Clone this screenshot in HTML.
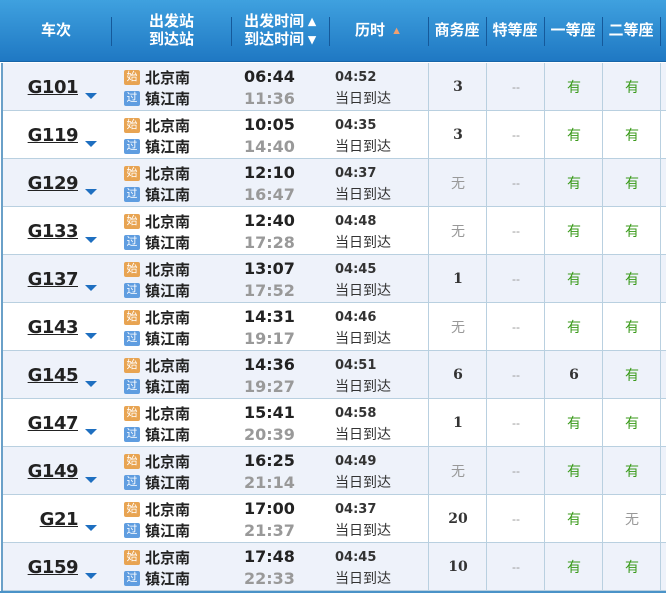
<!DOCTYPE html>
<html><head><meta charset="utf-8"><style>
*{margin:0;padding:0;box-sizing:border-box}
body{width:666px;height:600px;background:#fff;font-family:"Liberation Sans","Noto Sans CJK SC",sans-serif;position:relative;overflow:hidden}
.hd{position:absolute;left:0;top:0;width:666px;height:62px;background:linear-gradient(#3fa1df,#1f78c3);border-bottom:1px solid #1765a8}
.hc{position:absolute;top:0;height:62px;color:#fff;font-weight:bold;font-size:15px;display:flex;align-items:center;justify-content:center;text-align:center;line-height:18px}
.sep{position:absolute;top:17px;width:1px;height:29px;background:#15599a}
.row{position:absolute;left:3px;width:663px;height:48px;border-bottom:1px solid #b9d0e0}
.row.a{background:#eef2fa}
.tn{position:absolute;right:588px;top:14px;font:bold 18px "DejaVu Sans",sans-serif;color:#222;text-decoration:underline;letter-spacing:-0.5px}
.arr{position:absolute;left:82px;top:30px;width:0;height:0;border-left:6px solid transparent;border-right:6px solid transparent;border-top:6px solid #1e6fc0}
.ic{position:absolute;left:121px;width:16px;height:15px;font-size:11px;color:#fff;text-align:center;line-height:15px;border-radius:2px}
.st{position:absolute;left:142px;font-size:15px;color:#222;font-weight:bold}
.t1,.t2{position:absolute;left:241px;font:bold 16px "DejaVu Sans",sans-serif}
.t1{top:4px;color:#222}.t2{top:26px;color:#999}
.d1{position:absolute;left:332px;top:7px;font:bold 13px "DejaVu Sans",sans-serif;color:#333}
.d2{position:absolute;left:332px;top:25px;font-size:14px;color:#333}
.c{position:absolute;top:0;height:47px;width:58px;display:flex;align-items:center;justify-content:center;font-size:14px}
.vl{position:absolute;top:0;width:1px;height:48px;background:#b9d0e0}
.b{font:bold 14px "DejaVu Serif",serif;color:#333}
.g{color:#3a9a1a}.n{color:#999}.dash{color:#999;font-size:12px}
</style></head><body>
<div class="hd"></div>
<div class="hc" style="left:0;width:112px">车次</div>
<div class="sep" style="left:111px"></div>
<div class="hc" style="left:112px;width:119px">出发站<br>到达站</div>
<div class="sep" style="left:231px"></div>
<div class="hc" style="left:231px;width:98px">出发时间 ▴<br>到达时间 ▾</div>
<div class="sep" style="left:329px"></div>
<div class="hc" style="left:329px;width:99px">历时 <span style="color:#f0a070;margin-left:6px;font-size:11px">▲</span></div>
<div class="sep" style="left:428px"></div>
<div class="hc" style="left:428px;width:58px">商务座</div>
<div class="sep" style="left:486px"></div>
<div class="hc" style="left:486px;width:58px">特等座</div>
<div class="sep" style="left:544px"></div>
<div class="hc" style="left:544px;width:58px">一等座</div>
<div class="sep" style="left:602px"></div>
<div class="hc" style="left:602px;width:58px">二等座</div>
<div class="sep" style="left:660px"></div>
<div style="position:absolute;left:0;top:63px;width:3px;height:529px;background:#fff;border-right:2px solid #6aa0c8"></div>
<div style="position:absolute;left:0;top:591px;width:666px;height:2px;background:#4a93c8"></div>
<div id="rows"></div>
<script>
const d=[["G101","06:44","11:36","04:52","3","有","有"],["G119","10:05","14:40","04:35","3","有","有"],["G129","12:10","16:47","04:37","无","有","有"],["G133","12:40","17:28","04:48","无","有","有"],["G137","13:07","17:52","04:45","1","有","有"],["G143","14:31","19:17","04:46","无","有","有"],["G145","14:36","19:27","04:51","6","6","有"],["G147","15:41","20:39","04:58","1","有","有"],["G149","16:25","21:14","04:49","无","有","有"],["G21","17:00","21:37","04:37","20","有","无"],["G159","17:48","22:33","04:45","10","有","有"]];
function cell(v,x){let cls=v=="有"?"g":v=="无"?"n":v=="--"?"dash":"b";return `<div class="c ${cls}" style="left:${x}px">${v}</div>`}
let h="";d.forEach((r,i)=>{h+=`<div class="row ${i%2?'':'a'}" style="top:${63+i*48}px">
<div class="tn">${r[0]}</div><div class="arr"></div>
<div class="ic" style="top:7px;background:#e8a452">始</div><div class="st" style="top:4px">北京南</div>
<div class="ic" style="top:28px;background:#5f9de0">过</div><div class="st" style="top:25px">镇江南</div>
<div class="t1">${r[1]}</div><div class="t2">${r[2]}</div>
<div class="d1">${r[3]}</div><div class="d2">当日到达</div>
${cell(r[4],426)}${cell("--",484)}${cell(r[5],542)}${cell(r[6],600)}
<div class="vl" style="left:425px"></div><div class="vl" style="left:483px"></div><div class="vl" style="left:541px"></div><div class="vl" style="left:599px"></div><div class="vl" style="left:657px"></div>
</div>`});
document.getElementById("rows").innerHTML=h;
</script>
</body></html>
